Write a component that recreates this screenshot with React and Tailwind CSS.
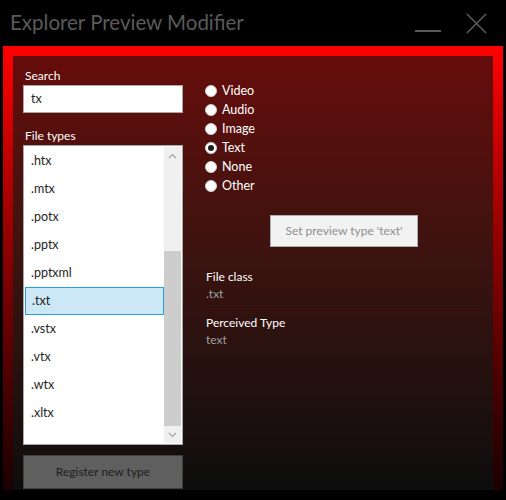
import React from "react";

const font = { fontFamily: 'Lato, "Noto Sans", sans-serif' };

const items = [".htx", ".mtx", ".potx", ".pptx", ".pptxml", ".txt", ".vstx", ".vtx", ".wtx", ".xltx"];
const radios = ["Video", "Audio", "Image", "Text", "None", "Other"];

function Radio({ label, checked }) {
  return (
    <div className="flex items-center h-[19px]">
      <div className="w-[12px] h-[12px] rounded-full bg-white border border-[#d0d0d0] flex items-center justify-center">
        {checked && <div className="w-[6px] h-[6px] rounded-full bg-[#1e1e1e]" />}
      </div>
      <span className="ml-[5px] text-[12.5px] text-white leading-[19px]">{label}</span>
    </div>
  );
}

export default function App() {
  return (
    <div className="w-[506px] h-[500px] bg-black flex flex-col" style={font}>
      {/* Title bar */}
      <div className="h-[46px] flex items-start relative">
        <div className="pl-[10px] pt-[8px] text-[20.5px] leading-[28px] text-[#5a5a5a]">Explorer Preview Modifier</div>
        <div className="ml-auto flex items-start">
          <div className="mt-[30px] w-[26px] h-[2px] bg-[#5a5a5a]" />
          <svg className="ml-[25px] mt-[13px] mr-[19px]" width="21" height="21" viewBox="0 0 21 21">
            <path d="M1 1 L20 20 M20 1 L1 20" stroke="#5a5a5a" strokeWidth="1.6" fill="none" />
          </svg>
        </div>
      </div>
      {/* Frame */}
      <div className="ml-[3px] w-[500px] h-[444px] pt-[10px] px-[10px] bg-gradient-to-b from-[#ff0000] to-[#1c0000]">
        <div className="w-full h-full bg-gradient-to-b from-[#660b0b] to-[#0d0d0d] px-[10px] flex">
          {/* Left column */}
          <div className="w-[160px] flex flex-col">
            <div className="mt-[12px] h-[16px] pl-[2px] text-[12px] leading-[16px] text-white">Search</div>
            <div className="mt-[1px] h-[28px] bg-white border border-[#a8a8a8] flex items-center pl-[7px] text-[12.5px] text-[#1e1e1e]">tx</div>
            <div className="mt-[15px] h-[17px] pl-[2px] text-[12px] leading-[16px] text-white">File types</div>
            <div className="h-[300px] bg-white border border-[#a8a8a8] p-px flex">
              <div className="flex-1 flex flex-col">
                {items.map((it) => (
                  <div
                    key={it}
                    className={
                      "h-[28px] flex items-center pl-[6px] text-[12.5px] text-[#1e1e1e] " +
                      (it === ".txt" ? "bg-[#cce8f7] border border-[#26a0da] pl-[5px]" : "")
                    }
                  >
                    {it}
                  </div>
                ))}
              </div>
              <div className="w-[17px] bg-[#f0f0f0] flex flex-col">
                <div className="h-[17px] flex items-center justify-center">
                  <svg width="9" height="6" viewBox="0 0 9 6">
                    <path d="M1 5 L4.5 1.5 L8 5" stroke="#a3a3a3" strokeWidth="1.2" fill="none" />
                  </svg>
                </div>
                <div className="flex-1 flex flex-col">
                  <div className="h-[87px]" />
                  <div className="flex-1 bg-[#cdcdcd]" />
                </div>
                <div className="h-[17px] flex items-center justify-center">
                  <svg width="9" height="6" viewBox="0 0 9 6">
                    <path d="M1 1 L4.5 4.5 L8 1" stroke="#a3a3a3" strokeWidth="1.2" fill="none" />
                  </svg>
                </div>
              </div>
            </div>
            <div className="mt-[10px] h-[34px] bg-[#5f5f5f] border border-[#404040] flex items-center justify-center text-[12px] text-[#1e1e1e]">
              Register new type
            </div>
          </div>
          {/* Right column */}
          <div className="flex-1 ml-[22px] flex flex-col">
            <div className="mt-[25px] flex flex-col">
              {radios.map((r) => (
                <Radio key={r} label={r} checked={r === "Text"} />
              ))}
            </div>
            <div className="mt-[20px] flex justify-center">
              <div className="w-[148px] h-[32px] bg-[#f2f2f2] border border-[#adadad] flex items-center justify-center text-[12px] text-[#8f8f8f]">
                Set preview type 'text'
              </div>
            </div>
            <div className="mt-[21px] pl-px text-[12px] leading-[17px] text-white">File class</div>
            <div className="pl-px text-[12px] leading-[17px] text-[#a0a0a0]">.txt</div>
            <div className="mt-[6px] h-px bg-[#4a0d0d] -ml-px" />
            <div className="mt-[5px] pl-px text-[12px] leading-[17px] text-white">Perceived Type</div>
            <div className="pl-px text-[12px] leading-[17px] text-[#a0a0a0]">text</div>
          </div>
        </div>
      </div>
    </div>
  );
}
